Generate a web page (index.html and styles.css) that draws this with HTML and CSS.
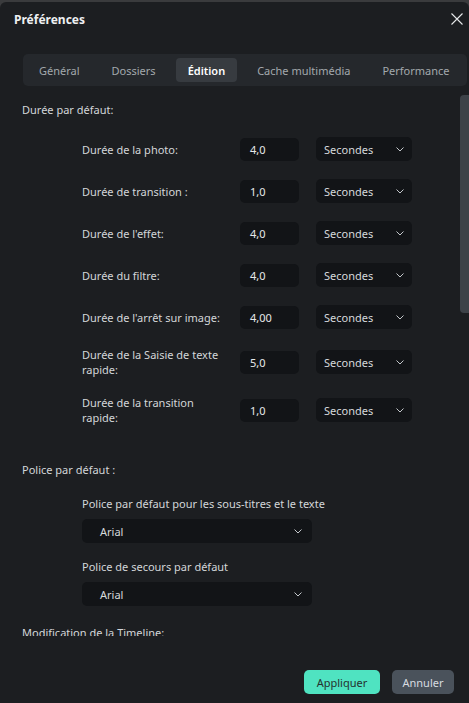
FILE: index.html
```html
<!DOCTYPE html>
<html lang="fr">
<head>
<meta charset="utf-8">
<title>Préférences</title>
<link rel="stylesheet" href="styles.css">
</head>
<body>
<div class="dialog">
  <header class="titlebar">
    <span class="title">Préférences</span>
    <svg class="close" width="12" height="12" viewBox="0 0 12 12"><path d="M0.5 0.5 L11.5 11.5 M11.5 0.5 L0.5 11.5" stroke="#e6e8ea" stroke-width="1.1" fill="none"/></svg>
  </header>
  <nav class="tabs">
    <span class="tab">Général</span>
    <span class="tab">Dossiers</span>
    <span class="tab active">Édition</span>
    <span class="tab">Cache multimédia</span>
    <span class="tab">Performance</span>
  </nav>
  <div class="scroll">
    <div class="content">
      <div class="heading">Durée par défaut:</div>
      <div class="rows">
        <div class="row"><span class="label">Durée de la photo:</span><span class="input">4,0</span><span class="select unit">Secondes<svg class="chev" width="8" height="5" viewBox="0 0 8 5"><path d="M0.5 0.5 L4 4 L7.5 0.5" stroke="#c3c7cb" stroke-width="1" fill="none"/></svg></span></div>
        <div class="row"><span class="label">Durée de transition :</span><span class="input">1,0</span><span class="select unit">Secondes<svg class="chev" width="8" height="5" viewBox="0 0 8 5"><path d="M0.5 0.5 L4 4 L7.5 0.5" stroke="#c3c7cb" stroke-width="1" fill="none"/></svg></span></div>
        <div class="row"><span class="label">Durée de l'effet:</span><span class="input">4,0</span><span class="select unit">Secondes<svg class="chev" width="8" height="5" viewBox="0 0 8 5"><path d="M0.5 0.5 L4 4 L7.5 0.5" stroke="#c3c7cb" stroke-width="1" fill="none"/></svg></span></div>
        <div class="row"><span class="label">Durée du filtre:</span><span class="input">4,0</span><span class="select unit">Secondes<svg class="chev" width="8" height="5" viewBox="0 0 8 5"><path d="M0.5 0.5 L4 4 L7.5 0.5" stroke="#c3c7cb" stroke-width="1" fill="none"/></svg></span></div>
        <div class="row"><span class="label">Durée de l'arrêt sur image:</span><span class="input">4,00</span><span class="select unit">Secondes<svg class="chev" width="8" height="5" viewBox="0 0 8 5"><path d="M0.5 0.5 L4 4 L7.5 0.5" stroke="#c3c7cb" stroke-width="1" fill="none"/></svg></span></div>
        <div class="row"><span class="label">Durée de la Saisie de texte<br>rapide:</span><span class="input">5,0</span><span class="select unit">Secondes<svg class="chev" width="8" height="5" viewBox="0 0 8 5"><path d="M0.5 0.5 L4 4 L7.5 0.5" stroke="#c3c7cb" stroke-width="1" fill="none"/></svg></span></div>
        <div class="row"><span class="label">Durée de la transition<br>rapide:</span><span class="input">1,0</span><span class="select unit">Secondes<svg class="chev" width="8" height="5" viewBox="0 0 8 5"><path d="M0.5 0.5 L4 4 L7.5 0.5" stroke="#c3c7cb" stroke-width="1" fill="none"/></svg></span></div>
      </div>
      <div class="heading font-heading">Police par défaut :</div>
      <div class="fonts">
        <div class="sublabel">Police par défaut pour les sous-titres et le texte</div>
        <span class="select wide">Arial<svg class="chev" width="8" height="5" viewBox="0 0 8 5"><path d="M0.5 0.5 L4 4 L7.5 0.5" stroke="#c3c7cb" stroke-width="1" fill="none"/></svg></span>
        <div class="sublabel second">Police de secours par défaut</div>
        <span class="select wide">Arial<svg class="chev" width="8" height="5" viewBox="0 0 8 5"><path d="M0.5 0.5 L4 4 L7.5 0.5" stroke="#c3c7cb" stroke-width="1" fill="none"/></svg></span>
      </div>
      <div class="heading timeline">Modification de la Timeline:</div>
    </div>
    <div class="scrollbar"></div>
  </div>
  <footer class="footer">
    <button class="btn primary">Appliquer</button>
    <button class="btn secondary">Annuler</button>
  </footer>
</div>
</body>
</html>
```
FILE: styles.css
```css
* { box-sizing: border-box; }
html, body {
  margin: 0;
  padding: 0;
  background: #3a3b3d;
  width: 469px;
  height: 703px;
  overflow: hidden;
  font-family: "Noto Sans", "Open Sans", "Liberation Sans", sans-serif;
  font-size: 11px;
  color: #d3d6d9;
}
.dialog {
  margin-top: 2px;
  height: 701px;
  background: #1c1e21;
  border-radius: 6px 6px 0 0;
  display: flex;
  flex-direction: column;
}
.titlebar {
  height: 38px;
  display: flex;
  align-items: center;
  justify-content: space-between;
  padding: 0 6px 0 14px;
  flex: none;
}
.title {
  font-weight: 700;
  font-size: 12px;
  color: #eef0f2;
  margin-top: -4px;
}
.close { margin-top: -4px; }
.tabs {
  flex: none;
  margin: 14px 2px 0 23px;
  height: 32px;
  background: #25282c;
  border-radius: 5px;
  display: flex;
  align-items: center;
  padding: 0 0 0 4px;
  gap: 8px;
}
.tab {
  color: #a3a8ad;
  padding: 0 12px;
  height: 24px;
  line-height: 25px;
  border-radius: 4px;
  white-space: nowrap;
}
.tab.active {
  background: #373b40;
  color: #ffffff;
  font-weight: 600;
}
.scroll {
  flex: none;
  display: flex;
  margin-top: 7px;
  height: 543px;
  overflow: hidden;
}
.content {
  flex: 1;
  padding: 9px 0 0 22px;
  overflow: hidden;
}
.scrollbar {
  flex: none;
  width: 9px;
  height: 218px;
  background: #3d4248;
  border-radius: 4px 0 0 4px;
  margin-top: 2px;
}
.heading {
  line-height: 16px;
  color: #d3d6d9;
}
.rows {
  display: flex;
  flex-direction: column;
  gap: 18px;
  margin-top: 19px;
  padding-left: 60px;
}
.row {
  display: flex;
  align-items: center;
  min-height: 24px;
}
.label {
  width: 158px;
  line-height: 15px;
  white-space: nowrap;
  color: #d3d6d9;
}
.input {
  width: 59px;
  height: 23px;
  line-height: 23px;
  background: #121417;
  border-radius: 5px;
  padding-left: 10px;
  color: #e6e8ea;
}
.select {
  display: flex;
  align-items: center;
  justify-content: space-between;
  height: 24px;
  background: #121417;
  border-radius: 5px;
  color: #d6d9dc;
}
.unit {
  width: 96px;
  margin-left: 17px;
  padding: 0 8px 0 8px;
}
.font-heading { margin-top: 37px; }
.fonts {
  padding-left: 60px;
  margin-top: 18px;
  display: flex;
  flex-direction: column;
  align-items: flex-start;
}
.sublabel {
  line-height: 16px;
}
.sublabel.second { margin-top: 16px; }
.wide {
  width: 230px;
  margin-top: 7px;
  padding: 0 10px 0 18px;
}
.timeline { margin-top: 19px; }
.footer {
  flex: 1;
  display: flex;
  justify-content: flex-end;
  align-items: flex-start;
  gap: 12px;
  padding: 34px 15px 0 0;
}
.btn {
  font-family: inherit;
  font-size: 11px;
  border: none;
  height: 24px;
  border-radius: 5px;
  padding: 0;
}
.primary {
  width: 76px;
  background: #4fe3c1;
  color: #25312e;
}
.secondary {
  width: 62px;
  background: #4a525b;
  color: #d8dce0;
}
```
